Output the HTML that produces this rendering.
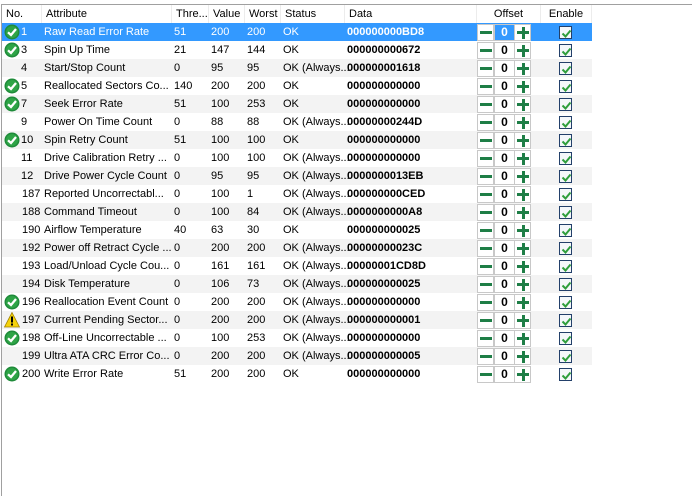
<!DOCTYPE html>
<html><head><meta charset="utf-8"><style>
*{margin:0;padding:0;box-sizing:border-box}
body{width:692px;height:496px;background:#fff;font-family:"Liberation Sans",sans-serif;font-size:11px;color:#000;position:relative;overflow:hidden}
#frame{position:absolute;left:1px;top:4px;width:691px;height:492px;border-top:1px solid #a0a0a0;border-left:1px solid #a0a0a0}
.hd{position:absolute;top:5px;height:18px;line-height:18px;border-right:1px solid #ececec;padding-left:4px;color:#000}
.r{position:absolute;left:2px;width:590px;height:18px;line-height:18px}
.g{background:#f3f3f3}
.sel{background:#3399ff;color:#fff}
.c{position:absolute;top:0;white-space:nowrap}
.d{font-weight:bold}
.ic{position:absolute;left:2px;top:1px;width:16px;height:16px}
.mb,.nb,.pb{position:absolute;top:1px;height:17px;border:1px solid #c8c8c8;background:#fff}
.mb{left:475px;width:17px}
.nb{left:492px;width:21px;text-align:center;font-weight:bold;line-height:15px;color:#000;font-size:12px}
.sel .nb{background:#3399ff;color:#fff}
.pb{left:512px;width:17px}
.mb:after{content:"";position:absolute;left:2px;top:6px;width:12px;height:3px;background:#1e7e46}
.pb:before{content:"";position:absolute;left:2px;top:6px;width:12px;height:3px;background:#1e7e46}
.pb:after{content:"";position:absolute;left:6.5px;top:2px;width:3px;height:12px;background:#1e7e46}
.cb{position:absolute;left:557px;top:3px;width:13px;height:13px;border:1px solid #23406a;background:#f4f7fa}
.cb svg{position:absolute;left:1px;top:1px}
</style></head><body>
<div id="frame"></div>
<div class="hd" style="left:2px;width:40px">No.</div>
<div class="hd" style="left:42px;width:130px">Attribute</div>
<div class="hd" style="left:172px;width:37px">Thre...</div>
<div class="hd" style="left:209px;width:36px">Value</div>
<div class="hd" style="left:245px;width:36px">Worst</div>
<div class="hd" style="left:281px;width:64px">Status</div>
<div class="hd" style="left:345px;width:132px">Data</div>
<div class="hd" style="left:477px;width:64px;text-align:center;padding:0">Offset</div>
<div class="hd" style="left:541px;width:51px;text-align:center;padding:0">Enable</div>

<svg width="0" height="0" style="position:absolute"><defs>
<g id="ok"><circle cx="8" cy="8" r="7.5" fill="#1f8b3a"/><circle cx="8" cy="8" r="6" fill="#2ea446"/><path d="M4 8.3 L7 11 L12 5" stroke="#fff" stroke-width="2.3" fill="none"/></g>
<g id="warn"><path d="M8 0.5 L15.5 15 L0.5 15 Z" fill="#f5d20a" stroke="#a08000" stroke-width="0.8"/><rect x="7" y="4.5" width="2" height="6" fill="#000"/><rect x="7" y="11.5" width="2" height="2" fill="#000"/></g>
<g id="ck"><path d="M1.5 5.5 L4.5 8.5 L9.5 2.5" stroke="#2f9e3c" stroke-width="2" fill="none"/></g>
</defs></svg>

<div id="rows"></div>
<script>
var d=[
["ok","1","Raw Read Error Rate","51","200","200","OK","000000000BD8"],
["ok","3","Spin Up Time","21","147","144","OK","000000000672"],
["","4","Start/Stop Count","0","95","95","OK (Always...","000000001618"],
["ok","5","Reallocated Sectors Co...","140","200","200","OK","000000000000"],
["ok","7","Seek Error Rate","51","100","253","OK","000000000000"],
["","9","Power On Time Count","0","88","88","OK (Always...","00000000244D"],
["ok","10","Spin Retry Count","51","100","100","OK","000000000000"],
["","11","Drive Calibration Retry ...","0","100","100","OK (Always...","000000000000"],
["","12","Drive Power Cycle Count","0","95","95","OK (Always...","0000000013EB"],
["","187","Reported Uncorrectabl...","0","100","1","OK (Always...","000000000CED"],
["","188","Command Timeout","0","100","84","OK (Always...","0000000000A8"],
["","190","Airflow Temperature","40","63","30","OK","000000000025"],
["","192","Power off Retract Cycle ...","0","200","200","OK (Always...","00000000023C"],
["","193","Load/Unload Cycle Cou...","0","161","161","OK (Always...","00000001CD8D"],
["","194","Disk Temperature","0","106","73","OK (Always...","000000000025"],
["ok","196","Reallocation Event Count","0","200","200","OK (Always...","000000000000"],
["warn","197","Current Pending Sector...","0","200","200","OK (Always...","000000000001"],
["ok","198","Off-Line Uncorrectable ...","0","100","253","OK (Always...","000000000000"],
["","199","Ultra ATA CRC Error Co...","0","200","200","OK (Always...","000000000005"],
["ok","200","Write Error Rate","51","200","200","OK","000000000000"]];
var h="";
d.forEach(function(r,i){
var cls="r"+(i==0?" sel":(i%2==0?" g":""));
var nx=r[1].length==3?20:19;
h+='<div class="'+cls+'" style="top:'+(23+i*18)+'px">'+
(r[0]?'<svg class="ic" viewBox="0 0 16 16"><use href="#'+r[0]+'"/></svg>':'')+
'<span class="c" style="left:'+nx+'px">'+r[1]+'</span>'+
'<span class="c" style="left:42px">'+r[2]+'</span>'+
'<span class="c" style="left:172px">'+r[3]+'</span>'+
'<span class="c" style="left:209px">'+r[4]+'</span>'+
'<span class="c" style="left:245px">'+r[5]+'</span>'+
'<span class="c" style="left:281px">'+r[6]+'</span>'+
'<span class="c d" style="left:345px">'+r[7]+'</span>'+
'<div class="mb"></div><div class="nb">0</div><div class="pb"></div>'+
'<div class="cb"><svg width="11" height="11" viewBox="0 0 11 11"><use href="#ck"/></svg></div></div>';
});
document.getElementById("rows").innerHTML=h;
</script>
</body></html>
